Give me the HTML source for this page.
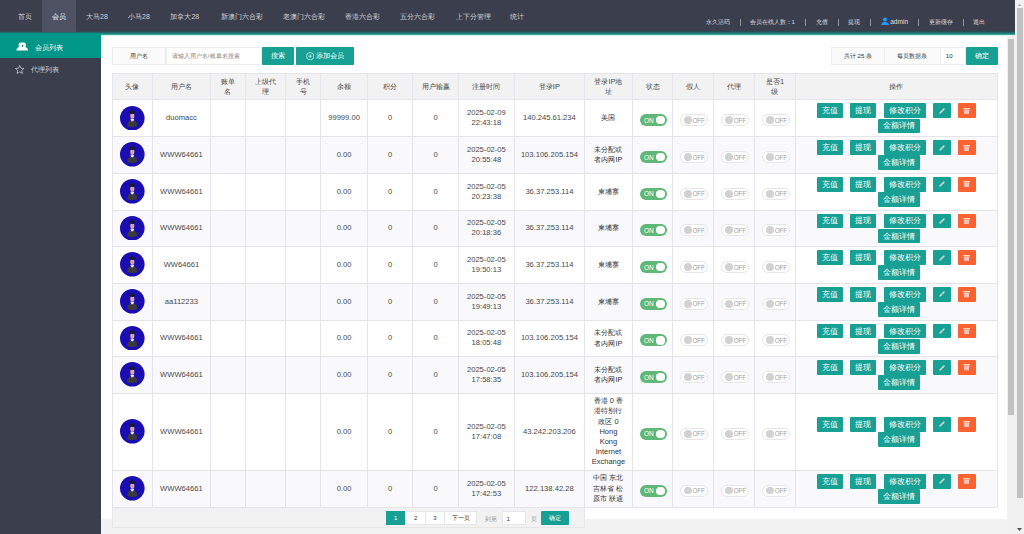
<!DOCTYPE html>
<html><head><meta charset="utf-8"><style>
*{margin:0;padding:0;box-sizing:border-box}
html,body{width:1024px;height:534px;overflow:hidden}
body{background:#f2f2f2;font-family:"Liberation Sans",sans-serif;color:#666;position:relative}
.a{position:absolute}
.c{position:absolute;display:flex;align-items:center;justify-content:center;text-align:center}
.t{position:absolute;white-space:nowrap}
.btn{position:absolute;background:#17a093;color:#fff;border-radius:1px;display:flex;align-items:center;justify-content:center;white-space:nowrap}
</style></head><body>
<div class="a" style="left:0;top:0;width:1015px;height:32px;background:#3b3e4d"></div>
<div class="a" style="left:0;top:31px;width:101px;height:4px;background:linear-gradient(to bottom,#3b3e4d 0px,#2c5055 1px,#088a80 2px,#009688 3px)"></div>
<div class="a" style="left:101px;top:30px;width:914px;height:7px;background:linear-gradient(to bottom,#3b3e4d 0px,#35454f 1px,#1e5558 2px,#21847f 3.2px,#1c7a76 4.2px,#b0f2e4 5.2px,#f0fffa 6px,#fff 7px)"></div>
<div class="a" style="left:41.6px;top:0;width:34.2px;height:32px;background:#4E5262"></div>
<div class="t" style="left:17.6px;top:12.2px;font-size:7px;line-height:9px;color:rgba(255,255,255,.75)">首页</div>
<div class="t" style="left:51.7px;top:12.2px;font-size:7px;line-height:9px;color:#fff">会员</div>
<div class="t" style="left:86px;top:12.2px;font-size:7px;line-height:9px;color:rgba(255,255,255,.75)">大马28</div>
<div class="t" style="left:128px;top:12.2px;font-size:7px;line-height:9px;color:rgba(255,255,255,.75)">小马28</div>
<div class="t" style="left:170.4px;top:12.2px;font-size:7px;line-height:9px;color:rgba(255,255,255,.75)">加拿大28</div>
<div class="t" style="left:220.5px;top:12.2px;font-size:7px;line-height:9px;color:rgba(255,255,255,.75)">新澳门六合彩</div>
<div class="t" style="left:282.8px;top:12.2px;font-size:7px;line-height:9px;color:rgba(255,255,255,.75)">老澳门六合彩</div>
<div class="t" style="left:345.2px;top:12.2px;font-size:7px;line-height:9px;color:rgba(255,255,255,.75)">香港六合彩</div>
<div class="t" style="left:400px;top:12.2px;font-size:7px;line-height:9px;color:rgba(255,255,255,.75)">五分六合彩</div>
<div class="t" style="left:456px;top:12.2px;font-size:7px;line-height:9px;color:rgba(255,255,255,.75)">上下分管理</div>
<div class="t" style="left:510px;top:12.2px;font-size:7px;line-height:9px;color:rgba(255,255,255,.75)">统计</div>
<div class="t" style="left:705.7px;top:17.6px;font-size:6px;line-height:8px;color:rgba(255,255,255,.8)">永久活码</div>
<div class="a" style="left:739.5px;top:19px;width:1px;height:6.7px;background:rgba(255,255,255,.45)"></div>
<div class="t" style="left:749.6px;top:17.6px;font-size:6px;line-height:8px;color:rgba(255,255,255,.8)">会员在线人数：1</div>
<div class="a" style="left:805.1px;top:19px;width:1px;height:6.7px;background:rgba(255,255,255,.45)"></div>
<div class="t" style="left:815.6px;top:17.6px;font-size:6px;line-height:8px;color:rgba(255,255,255,.8)">充值</div>
<div class="a" style="left:837.8px;top:19px;width:1px;height:6.7px;background:rgba(255,255,255,.45)"></div>
<div class="t" style="left:848px;top:17.6px;font-size:6px;line-height:8px;color:rgba(255,255,255,.8)">提现</div>
<div class="a" style="left:870.2px;top:19px;width:1px;height:6.7px;background:rgba(255,255,255,.45)"></div>
<div class="t" style="left:890.2px;top:17.6px;font-size:6.6px;line-height:8px;color:rgba(255,255,255,.85)">admin</div>
<div class="a" style="left:918.1px;top:19px;width:1px;height:6.7px;background:rgba(255,255,255,.45)"></div>
<div class="t" style="left:929.2px;top:17.6px;font-size:6px;line-height:8px;color:rgba(255,255,255,.8)">更新缓存</div>
<div class="a" style="left:962.9px;top:19px;width:1px;height:6.7px;background:rgba(255,255,255,.45)"></div>
<div class="t" style="left:973px;top:17.6px;font-size:6px;line-height:8px;color:rgba(255,255,255,.8)">退出</div>
<svg class="a" style="left:880.5px;top:16.5px" width="8" height="8.5" viewBox="0 0 16 17"><circle cx="8" cy="5" r="4" fill="#1E9FFF"/><path d="M0 17 Q1 10 8 10 Q15 10 16 17Z" fill="#1E9FFF"/></svg>
<div class="a" style="left:0;top:34.7px;width:101px;height:500px;background:#3b3e4d"></div>
<div class="a" style="left:0;top:34.7px;width:101px;height:23.3px;background:#009688"></div>
<div class="t" style="left:35px;top:42.5px;font-size:7px;line-height:9px;color:#fff">会员列表</div>
<div class="t" style="left:31px;top:64.5px;font-size:7px;line-height:9px;color:rgba(255,255,255,.75)">代理列表</div>
<svg class="a" style="left:15.5px;top:41.5px" width="12.5" height="9" viewBox="0 0 12.5 9"><rect x="2.7" y="0.4" width="7.1" height="5.8" rx="2.2" fill="#fff"/><path d="M0.4 8.5 Q0.5 5.3 4 5.1 H8.5 Q11.9 5.3 12 8.5Z" fill="#fff"/><path d="M5.6 2.8 L6.6 5.6 L7.6 3.2Z" fill="#2a7f78"/></svg>
<svg class="a" style="left:15px;top:64.5px" width="9.5" height="9" viewBox="0 0 20 19"><path d="M10 1 L12.6 6.8 L19 7.3 L14.2 11.5 L15.7 17.8 L10 14.5 L4.3 17.8 L5.8 11.5 L1 7.3 L7.4 6.8Z" fill="none" stroke="rgba(255,255,255,.75)" stroke-width="1.6" stroke-linejoin="round"/></svg>
<div class="a" style="left:101px;top:37px;width:906px;height:482px;background:#fff"></div>
<div class="c" style="left:111.9px;top:46.6px;width:54.1px;height:18.7px;background:#FBFBFB;border:0.6px solid #ececec;font-size:6px;color:#333;padding-top:1.2px">用户名</div>
<div class="a" style="left:166px;top:46.6px;width:96px;height:18.7px;background:#fff;border:0.6px solid #ececec"></div>
<div class="t" style="left:171.8px;top:51.9px;font-size:6.2px;line-height:8px;color:#808080">请输入用户名/账单名搜索</div>
<div class="btn" style="left:262px;top:46.6px;width:32.4px;height:18.7px;font-size:7.2px">搜索</div>
<div class="btn" style="left:296px;top:46.6px;width:57.8px;height:18.7px;font-size:7.1px"><svg width="8.4" height="8.4" viewBox="0 0 16 16" style="margin-right:2px"><circle cx="8" cy="8" r="7" fill="none" stroke="#fff" stroke-width="1.2"/><path d="M8 4.5V11.5M4.5 8H11.5" stroke="#fff" stroke-width="1.2"/></svg>添加会员</div>
<div class="c" style="left:830.6px;top:46.5px;width:54.7px;height:18.5px;background:#FBFBFB;border:0.6px solid #ececec;font-size:6.1px;color:#333;padding-top:1.6px">共计 25 条</div>
<div class="c" style="left:885.3px;top:46.5px;width:55.3px;height:18.5px;background:#FBFBFB;border:0.6px solid #ececec;border-left:0;font-size:6.1px;color:#333;padding-top:1.6px">每页数据条</div>
<div class="a" style="left:940.6px;top:46.5px;width:25px;height:18.5px;background:#fff;border:0.6px solid #ececec;border-left:0"></div>
<div class="t" style="left:945.8px;top:52px;font-size:6.1px;line-height:8px;color:#333">10</div>
<div class="btn" style="left:965.6px;top:46.5px;width:32.1px;height:18.5px;font-size:7.2px">确定</div>
<div class="a" style="left:112px;top:73.4px;width:885px;height:26.19999999999999px;background:#f2f2f2"></div>
<div class="a" style="left:112px;top:136.6px;width:885px;height:36.70000000000002px;background:#f9f9fc"></div>
<div class="a" style="left:112px;top:210px;width:885px;height:36.599999999999994px;background:#f9f9fc"></div>
<div class="a" style="left:112px;top:283.3px;width:885px;height:36.89999999999998px;background:#f9f9fc"></div>
<div class="a" style="left:112px;top:356.5px;width:885px;height:36.80000000000001px;background:#f9f9fc"></div>
<div class="a" style="left:112px;top:470px;width:885px;height:37px;background:#f9f9fc"></div>
<div class="a" style="left:112px;top:507px;width:472.5px;height:21.3px;background:#f2f2f2;border:0.6px solid #e6e6e6;border-top:0"></div>
<div class="a" style="left:112px;top:73.10000000000001px;width:885px;height:0.65px;background:#e4e4ea"></div>
<div class="a" style="left:112px;top:99.3px;width:885px;height:0.65px;background:#e4e4ea"></div>
<div class="a" style="left:112px;top:99.3px;width:885px;height:0.65px;background:#e4e4ea"></div>
<div class="a" style="left:112px;top:136.29999999999998px;width:885px;height:0.65px;background:#e4e4ea"></div>
<div class="a" style="left:112px;top:173.0px;width:885px;height:0.65px;background:#e4e4ea"></div>
<div class="a" style="left:112px;top:209.7px;width:885px;height:0.65px;background:#e4e4ea"></div>
<div class="a" style="left:112px;top:246.29999999999998px;width:885px;height:0.65px;background:#e4e4ea"></div>
<div class="a" style="left:112px;top:283.0px;width:885px;height:0.65px;background:#e4e4ea"></div>
<div class="a" style="left:112px;top:319.9px;width:885px;height:0.65px;background:#e4e4ea"></div>
<div class="a" style="left:112px;top:356.2px;width:885px;height:0.65px;background:#e4e4ea"></div>
<div class="a" style="left:112px;top:393.0px;width:885px;height:0.65px;background:#e4e4ea"></div>
<div class="a" style="left:112px;top:469.7px;width:885px;height:0.65px;background:#e4e4ea"></div>
<div class="a" style="left:112px;top:506.7px;width:885px;height:0.65px;background:#e4e4ea"></div>
<div class="a" style="left:111.7px;top:73.4px;width:0.65px;height:433.6px;background:#e4e4ea"></div>
<div class="a" style="left:152.2px;top:73.4px;width:0.65px;height:433.6px;background:#e4e4ea"></div>
<div class="a" style="left:210.0px;top:73.4px;width:0.65px;height:433.6px;background:#e4e4ea"></div>
<div class="a" style="left:245.0px;top:73.4px;width:0.65px;height:433.6px;background:#e4e4ea"></div>
<div class="a" style="left:285.3px;top:73.4px;width:0.65px;height:433.6px;background:#e4e4ea"></div>
<div class="a" style="left:320.3px;top:73.4px;width:0.65px;height:433.6px;background:#e4e4ea"></div>
<div class="a" style="left:367.2px;top:73.4px;width:0.65px;height:433.6px;background:#e4e4ea"></div>
<div class="a" style="left:412.4px;top:73.4px;width:0.65px;height:433.6px;background:#e4e4ea"></div>
<div class="a" style="left:458.09999999999997px;top:73.4px;width:0.65px;height:433.6px;background:#e4e4ea"></div>
<div class="a" style="left:514.1px;top:73.4px;width:0.65px;height:433.6px;background:#e4e4ea"></div>
<div class="a" style="left:584.1px;top:73.4px;width:0.65px;height:433.6px;background:#e4e4ea"></div>
<div class="a" style="left:632.2px;top:73.4px;width:0.65px;height:433.6px;background:#e4e4ea"></div>
<div class="a" style="left:672.2px;top:73.4px;width:0.65px;height:433.6px;background:#e4e4ea"></div>
<div class="a" style="left:713.1px;top:73.4px;width:0.65px;height:433.6px;background:#e4e4ea"></div>
<div class="a" style="left:754.4000000000001px;top:73.4px;width:0.65px;height:433.6px;background:#e4e4ea"></div>
<div class="a" style="left:795.0px;top:73.4px;width:0.65px;height:433.6px;background:#e4e4ea"></div>
<div class="a" style="left:996.7px;top:73.4px;width:0.65px;height:433.6px;background:#e4e4ea"></div>
<div class="c" style="left:112px;top:74.4px;width:40.5px;height:26.19999999999999px;font-size:7.5px;line-height:10.8px;color:#4a4a4a"><div><span style="font-size:0.93em">头像</span></div></div>
<div class="c" style="left:152.5px;top:74.4px;width:57.80000000000001px;height:26.19999999999999px;font-size:7.5px;line-height:10.8px;color:#4a4a4a"><div><span style="font-size:0.93em">用户名</span></div></div>
<div class="c" style="left:210.3px;top:74.4px;width:35.0px;height:26.19999999999999px;font-size:7.5px;line-height:10.8px;color:#4a4a4a"><div><span style="font-size:0.93em">账单</span><br><span style="font-size:0.93em">名</span></div></div>
<div class="c" style="left:245.3px;top:74.4px;width:40.30000000000001px;height:26.19999999999999px;font-size:7.5px;line-height:10.8px;color:#4a4a4a"><div><span style="font-size:0.93em">上级代</span><br><span style="font-size:0.93em">理</span></div></div>
<div class="c" style="left:285.6px;top:74.4px;width:35.0px;height:26.19999999999999px;font-size:7.5px;line-height:10.8px;color:#4a4a4a"><div><span style="font-size:0.93em">手机</span><br><span style="font-size:0.93em">号</span></div></div>
<div class="c" style="left:320.6px;top:74.4px;width:46.89999999999998px;height:26.19999999999999px;font-size:7.5px;line-height:10.8px;color:#4a4a4a"><div><span style="font-size:0.93em">余额</span></div></div>
<div class="c" style="left:367.5px;top:74.4px;width:45.19999999999999px;height:26.19999999999999px;font-size:7.5px;line-height:10.8px;color:#4a4a4a"><div><span style="font-size:0.93em">积分</span></div></div>
<div class="c" style="left:412.7px;top:74.4px;width:45.69999999999999px;height:26.19999999999999px;font-size:7.5px;line-height:10.8px;color:#4a4a4a"><div><span style="font-size:0.93em">用户输赢</span></div></div>
<div class="c" style="left:458.4px;top:74.4px;width:56.0px;height:26.19999999999999px;font-size:7.5px;line-height:10.8px;color:#4a4a4a"><div><span style="font-size:0.93em">注册时间</span></div></div>
<div class="c" style="left:514.4px;top:74.4px;width:70.0px;height:26.19999999999999px;font-size:7.5px;line-height:10.8px;color:#4a4a4a"><div><span style="font-size:0.93em">登录</span>IP</div></div>
<div class="c" style="left:584.4px;top:74.4px;width:48.10000000000002px;height:26.19999999999999px;font-size:7.5px;line-height:10.8px;color:#4a4a4a"><div><span style="font-size:0.93em">登录</span>IP<span style="font-size:0.93em">地</span><br><span style="font-size:0.93em">址</span></div></div>
<div class="c" style="left:632.5px;top:74.4px;width:40.0px;height:26.19999999999999px;font-size:7.5px;line-height:10.8px;color:#4a4a4a"><div><span style="font-size:0.93em">状态</span></div></div>
<div class="c" style="left:672.5px;top:74.4px;width:40.89999999999998px;height:26.19999999999999px;font-size:7.5px;line-height:10.8px;color:#4a4a4a"><div><span style="font-size:0.93em">假人</span></div></div>
<div class="c" style="left:713.4px;top:74.4px;width:41.30000000000007px;height:26.19999999999999px;font-size:7.5px;line-height:10.8px;color:#4a4a4a"><div><span style="font-size:0.93em">代理</span></div></div>
<div class="c" style="left:754.7px;top:74.4px;width:40.59999999999991px;height:26.19999999999999px;font-size:7.5px;line-height:10.8px;color:#4a4a4a"><div><span style="font-size:0.93em">是否</span>1<br><span style="font-size:0.93em">级</span></div></div>
<div class="c" style="left:795.3px;top:74.4px;width:201.70000000000005px;height:26.19999999999999px;font-size:7.5px;line-height:10.8px;color:#4a4a4a"><div><span style="font-size:0.93em">操作</span></div></div>
<div class="c" style="left:112px;top:99.6px;width:40.5px;height:37.0px;font-size:7.6px;line-height:9.9px;color:#484848;"><div><svg style="display:block;margin-top:-0.4px" width="24.6" height="24.6" viewBox="0 0 50 50"><circle cx="25" cy="25" r="25" fill="#1a0eb0"/><g><path d="M15 41 Q14 30 25 29 Q36 30 35 41 Q25 44 15 41Z" fill="#3a3a3c"/><path d="M21 26 H29 L27 31 H23Z" fill="#e8e8ee"/><ellipse cx="25" cy="20" rx="4.2" ry="6" fill="#dcaaa6"/><ellipse cx="25" cy="12.5" rx="4.8" ry="3.8" fill="#1a1a22"/></g></svg></div></div>
<div class="c" style="left:152.5px;top:99.6px;width:57.80000000000001px;height:37.0px;font-size:7.6px;line-height:9.9px;color:#484848;"><div>duomacc</div></div>
<div class="c" style="left:320.6px;top:99.6px;width:46.89999999999998px;height:37.0px;font-size:7.6px;line-height:9.9px;color:#484848;"><div>99999.00</div></div>
<div class="c" style="left:367.5px;top:99.6px;width:45.19999999999999px;height:37.0px;font-size:7.6px;line-height:9.9px;color:#484848;"><div>0</div></div>
<div class="c" style="left:412.7px;top:99.6px;width:45.69999999999999px;height:37.0px;font-size:7.6px;line-height:9.9px;color:#484848;"><div>0</div></div>
<div class="c" style="left:458.4px;top:99.6px;width:56.0px;height:37.0px;font-size:7.6px;line-height:9.9px;color:#484848;"><div>2025-02-09<br>22:43:18</div></div>
<div class="c" style="left:514.4px;top:99.6px;width:70.0px;height:37.0px;font-size:7.6px;line-height:9.9px;color:#484848;"><div>140.245.61.234</div></div>
<div class="c" style="left:584.4px;top:99.6px;width:48.10000000000002px;height:37.0px;font-size:7.6px;line-height:9.9px;color:#484848;font-size:7.5px;line-height:10.2px;color:#333;padding-top:0.5px"><div><span style="font-size:0.93em">美国</span></div></div>
<div class="a" style="left:639.9px;top:114.19999999999999px;width:27px;height:12px;border-radius:6px;background:#5FB878"></div>
<div class="a" style="left:656.4px;top:116.1px;width:8.2px;height:8.2px;border-radius:50%;background:#fff"></div>
<div class="t" style="left:643.9px;top:115.69999999999999px;font-size:6.5px;line-height:9px;color:#fff">ON</div>
<div class="a" style="left:680.1px;top:114.19999999999999px;width:27.5px;height:12px;border-radius:6px;border:0.8px solid #e6e6e6;background:#fff"></div>
<div class="a" style="left:683.9px;top:116.19999999999999px;width:7.8px;height:7.8px;border-radius:50%;background:#d2d2d2"></div>
<div class="t" style="left:692.5px;top:115.69999999999999px;font-size:6.3px;line-height:9px;color:#a0a0a0;letter-spacing:-0.15px">OFF</div>
<div class="a" style="left:721.3px;top:114.19999999999999px;width:27.5px;height:12px;border-radius:6px;border:0.8px solid #e6e6e6;background:#fff"></div>
<div class="a" style="left:725.0999999999999px;top:116.19999999999999px;width:7.8px;height:7.8px;border-radius:50%;background:#d2d2d2"></div>
<div class="t" style="left:733.6999999999999px;top:115.69999999999999px;font-size:6.3px;line-height:9px;color:#a0a0a0;letter-spacing:-0.15px">OFF</div>
<div class="a" style="left:762.3px;top:114.19999999999999px;width:27.5px;height:12px;border-radius:6px;border:0.8px solid #e6e6e6;background:#fff"></div>
<div class="a" style="left:766.0999999999999px;top:116.19999999999999px;width:7.8px;height:7.8px;border-radius:50%;background:#d2d2d2"></div>
<div class="t" style="left:774.6999999999999px;top:115.69999999999999px;font-size:6.3px;line-height:9px;color:#a0a0a0;letter-spacing:-0.15px">OFF</div>
<div class="btn" style="left:817px;top:103.39999999999999px;width:25.9px;height:14.8px;font-size:7.9px">充值</div>
<div class="btn" style="left:850px;top:103.39999999999999px;width:26px;height:14.8px;font-size:7.9px">提现</div>
<div class="btn" style="left:883.5px;top:103.39999999999999px;width:42px;height:14.8px;font-size:7.9px">修改积分</div>
<div class="btn" style="left:932.7px;top:103.39999999999999px;width:17.9px;height:14.8px"><svg width="6" height="6" viewBox="0 0 12 12"><path d="M2 10 L10 2" stroke="#fff" stroke-width="2.2" stroke-linecap="round"/></svg></div>
<div class="btn" style="left:957.8px;top:103.39999999999999px;width:17.9px;height:14.8px;background:#fb6232"><svg width="7" height="6.2" viewBox="0 0 14 12.4"><rect x="0" y="0" width="14" height="2.4" fill="rgba(255,228,200,.9)"/><path d="M1.4 3H12.6L11.8 12.4H2.2Z" fill="rgba(255,215,215,.8)"/></svg></div>
<div class="btn" style="left:878px;top:118.49999999999999px;width:41.8px;height:14.8px;font-size:7.9px">金额详情</div>
<div class="c" style="left:112px;top:136.6px;width:40.5px;height:36.70000000000002px;font-size:7.6px;line-height:9.9px;color:#484848;"><div><svg style="display:block;margin-top:-0.4px" width="24.6" height="24.6" viewBox="0 0 50 50"><circle cx="25" cy="25" r="25" fill="#1a0eb0"/><g><path d="M15 41 Q14 30 25 29 Q36 30 35 41 Q25 44 15 41Z" fill="#3a3a3c"/><path d="M21 26 H29 L27 31 H23Z" fill="#e8e8ee"/><ellipse cx="25" cy="20" rx="4.2" ry="6" fill="#dcaaa6"/><ellipse cx="25" cy="12.5" rx="4.8" ry="3.8" fill="#1a1a22"/></g></svg></div></div>
<div class="c" style="left:152.5px;top:136.6px;width:57.80000000000001px;height:36.70000000000002px;font-size:7.6px;line-height:9.9px;color:#484848;"><div>WWW64661</div></div>
<div class="c" style="left:320.6px;top:136.6px;width:46.89999999999998px;height:36.70000000000002px;font-size:7.6px;line-height:9.9px;color:#484848;"><div>0.00</div></div>
<div class="c" style="left:367.5px;top:136.6px;width:45.19999999999999px;height:36.70000000000002px;font-size:7.6px;line-height:9.9px;color:#484848;"><div>0</div></div>
<div class="c" style="left:412.7px;top:136.6px;width:45.69999999999999px;height:36.70000000000002px;font-size:7.6px;line-height:9.9px;color:#484848;"><div>0</div></div>
<div class="c" style="left:458.4px;top:136.6px;width:56.0px;height:36.70000000000002px;font-size:7.6px;line-height:9.9px;color:#484848;"><div>2025-02-05<br>20:55:48</div></div>
<div class="c" style="left:514.4px;top:136.6px;width:70.0px;height:36.70000000000002px;font-size:7.6px;line-height:9.9px;color:#484848;"><div>103.106.205.154</div></div>
<div class="c" style="left:584.4px;top:136.6px;width:48.10000000000002px;height:36.70000000000002px;font-size:7.6px;line-height:9.9px;color:#484848;font-size:7.5px;line-height:10.2px;color:#333;padding-top:0.5px"><div><span style="font-size:0.93em">未分配或</span><br><span style="font-size:0.93em">者内网</span>IP</div></div>
<div class="a" style="left:639.9px;top:151.04999999999998px;width:27px;height:12px;border-radius:6px;background:#5FB878"></div>
<div class="a" style="left:656.4px;top:152.95px;width:8.2px;height:8.2px;border-radius:50%;background:#fff"></div>
<div class="t" style="left:643.9px;top:152.54999999999998px;font-size:6.5px;line-height:9px;color:#fff">ON</div>
<div class="a" style="left:680.1px;top:151.04999999999998px;width:27.5px;height:12px;border-radius:6px;border:0.8px solid #e6e6e6;background:#fff"></div>
<div class="a" style="left:683.9px;top:153.04999999999998px;width:7.8px;height:7.8px;border-radius:50%;background:#d2d2d2"></div>
<div class="t" style="left:692.5px;top:152.54999999999998px;font-size:6.3px;line-height:9px;color:#a0a0a0;letter-spacing:-0.15px">OFF</div>
<div class="a" style="left:721.3px;top:151.04999999999998px;width:27.5px;height:12px;border-radius:6px;border:0.8px solid #e6e6e6;background:#fff"></div>
<div class="a" style="left:725.0999999999999px;top:153.04999999999998px;width:7.8px;height:7.8px;border-radius:50%;background:#d2d2d2"></div>
<div class="t" style="left:733.6999999999999px;top:152.54999999999998px;font-size:6.3px;line-height:9px;color:#a0a0a0;letter-spacing:-0.15px">OFF</div>
<div class="a" style="left:762.3px;top:151.04999999999998px;width:27.5px;height:12px;border-radius:6px;border:0.8px solid #e6e6e6;background:#fff"></div>
<div class="a" style="left:766.0999999999999px;top:153.04999999999998px;width:7.8px;height:7.8px;border-radius:50%;background:#d2d2d2"></div>
<div class="t" style="left:774.6999999999999px;top:152.54999999999998px;font-size:6.3px;line-height:9px;color:#a0a0a0;letter-spacing:-0.15px">OFF</div>
<div class="btn" style="left:817px;top:140.25px;width:25.9px;height:14.8px;font-size:7.9px">充值</div>
<div class="btn" style="left:850px;top:140.25px;width:26px;height:14.8px;font-size:7.9px">提现</div>
<div class="btn" style="left:883.5px;top:140.25px;width:42px;height:14.8px;font-size:7.9px">修改积分</div>
<div class="btn" style="left:932.7px;top:140.25px;width:17.9px;height:14.8px"><svg width="6" height="6" viewBox="0 0 12 12"><path d="M2 10 L10 2" stroke="#fff" stroke-width="2.2" stroke-linecap="round"/></svg></div>
<div class="btn" style="left:957.8px;top:140.25px;width:17.9px;height:14.8px;background:#fb6232"><svg width="7" height="6.2" viewBox="0 0 14 12.4"><rect x="0" y="0" width="14" height="2.4" fill="rgba(255,228,200,.9)"/><path d="M1.4 3H12.6L11.8 12.4H2.2Z" fill="rgba(255,215,215,.8)"/></svg></div>
<div class="btn" style="left:878px;top:155.35px;width:41.8px;height:14.8px;font-size:7.9px">金额详情</div>
<div class="c" style="left:112px;top:173.3px;width:40.5px;height:36.69999999999999px;font-size:7.6px;line-height:9.9px;color:#484848;"><div><svg style="display:block;margin-top:-0.4px" width="24.6" height="24.6" viewBox="0 0 50 50"><circle cx="25" cy="25" r="25" fill="#1a0eb0"/><g><path d="M15 41 Q14 30 25 29 Q36 30 35 41 Q25 44 15 41Z" fill="#3a3a3c"/><path d="M21 26 H29 L27 31 H23Z" fill="#e8e8ee"/><ellipse cx="25" cy="20" rx="4.2" ry="6" fill="#dcaaa6"/><ellipse cx="25" cy="12.5" rx="4.8" ry="3.8" fill="#1a1a22"/></g></svg></div></div>
<div class="c" style="left:152.5px;top:173.3px;width:57.80000000000001px;height:36.69999999999999px;font-size:7.6px;line-height:9.9px;color:#484848;"><div>WWW64661</div></div>
<div class="c" style="left:320.6px;top:173.3px;width:46.89999999999998px;height:36.69999999999999px;font-size:7.6px;line-height:9.9px;color:#484848;"><div>0.00</div></div>
<div class="c" style="left:367.5px;top:173.3px;width:45.19999999999999px;height:36.69999999999999px;font-size:7.6px;line-height:9.9px;color:#484848;"><div>0</div></div>
<div class="c" style="left:412.7px;top:173.3px;width:45.69999999999999px;height:36.69999999999999px;font-size:7.6px;line-height:9.9px;color:#484848;"><div>0</div></div>
<div class="c" style="left:458.4px;top:173.3px;width:56.0px;height:36.69999999999999px;font-size:7.6px;line-height:9.9px;color:#484848;"><div>2025-02-05<br>20:23:38</div></div>
<div class="c" style="left:514.4px;top:173.3px;width:70.0px;height:36.69999999999999px;font-size:7.6px;line-height:9.9px;color:#484848;"><div>36.37.253.114</div></div>
<div class="c" style="left:584.4px;top:173.3px;width:48.10000000000002px;height:36.69999999999999px;font-size:7.6px;line-height:9.9px;color:#484848;font-size:7.5px;line-height:10.2px;color:#333;padding-top:0.5px"><div><span style="font-size:0.93em">柬埔寨</span></div></div>
<div class="a" style="left:639.9px;top:187.75px;width:27px;height:12px;border-radius:6px;background:#5FB878"></div>
<div class="a" style="left:656.4px;top:189.65px;width:8.2px;height:8.2px;border-radius:50%;background:#fff"></div>
<div class="t" style="left:643.9px;top:189.25px;font-size:6.5px;line-height:9px;color:#fff">ON</div>
<div class="a" style="left:680.1px;top:187.75px;width:27.5px;height:12px;border-radius:6px;border:0.8px solid #e6e6e6;background:#fff"></div>
<div class="a" style="left:683.9px;top:189.75px;width:7.8px;height:7.8px;border-radius:50%;background:#d2d2d2"></div>
<div class="t" style="left:692.5px;top:189.25px;font-size:6.3px;line-height:9px;color:#a0a0a0;letter-spacing:-0.15px">OFF</div>
<div class="a" style="left:721.3px;top:187.75px;width:27.5px;height:12px;border-radius:6px;border:0.8px solid #e6e6e6;background:#fff"></div>
<div class="a" style="left:725.0999999999999px;top:189.75px;width:7.8px;height:7.8px;border-radius:50%;background:#d2d2d2"></div>
<div class="t" style="left:733.6999999999999px;top:189.25px;font-size:6.3px;line-height:9px;color:#a0a0a0;letter-spacing:-0.15px">OFF</div>
<div class="a" style="left:762.3px;top:187.75px;width:27.5px;height:12px;border-radius:6px;border:0.8px solid #e6e6e6;background:#fff"></div>
<div class="a" style="left:766.0999999999999px;top:189.75px;width:7.8px;height:7.8px;border-radius:50%;background:#d2d2d2"></div>
<div class="t" style="left:774.6999999999999px;top:189.25px;font-size:6.3px;line-height:9px;color:#a0a0a0;letter-spacing:-0.15px">OFF</div>
<div class="btn" style="left:817px;top:176.95000000000002px;width:25.9px;height:14.8px;font-size:7.9px">充值</div>
<div class="btn" style="left:850px;top:176.95000000000002px;width:26px;height:14.8px;font-size:7.9px">提现</div>
<div class="btn" style="left:883.5px;top:176.95000000000002px;width:42px;height:14.8px;font-size:7.9px">修改积分</div>
<div class="btn" style="left:932.7px;top:176.95000000000002px;width:17.9px;height:14.8px"><svg width="6" height="6" viewBox="0 0 12 12"><path d="M2 10 L10 2" stroke="#fff" stroke-width="2.2" stroke-linecap="round"/></svg></div>
<div class="btn" style="left:957.8px;top:176.95000000000002px;width:17.9px;height:14.8px;background:#fb6232"><svg width="7" height="6.2" viewBox="0 0 14 12.4"><rect x="0" y="0" width="14" height="2.4" fill="rgba(255,228,200,.9)"/><path d="M1.4 3H12.6L11.8 12.4H2.2Z" fill="rgba(255,215,215,.8)"/></svg></div>
<div class="btn" style="left:878px;top:192.05px;width:41.8px;height:14.8px;font-size:7.9px">金额详情</div>
<div class="c" style="left:112px;top:210px;width:40.5px;height:36.599999999999994px;font-size:7.6px;line-height:9.9px;color:#484848;"><div><svg style="display:block;margin-top:-0.4px" width="24.6" height="24.6" viewBox="0 0 50 50"><circle cx="25" cy="25" r="25" fill="#1a0eb0"/><g><path d="M15 41 Q14 30 25 29 Q36 30 35 41 Q25 44 15 41Z" fill="#3a3a3c"/><path d="M21 26 H29 L27 31 H23Z" fill="#e8e8ee"/><ellipse cx="25" cy="20" rx="4.2" ry="6" fill="#dcaaa6"/><ellipse cx="25" cy="12.5" rx="4.8" ry="3.8" fill="#1a1a22"/></g></svg></div></div>
<div class="c" style="left:152.5px;top:210px;width:57.80000000000001px;height:36.599999999999994px;font-size:7.6px;line-height:9.9px;color:#484848;"><div>WWW64661</div></div>
<div class="c" style="left:320.6px;top:210px;width:46.89999999999998px;height:36.599999999999994px;font-size:7.6px;line-height:9.9px;color:#484848;"><div>0.00</div></div>
<div class="c" style="left:367.5px;top:210px;width:45.19999999999999px;height:36.599999999999994px;font-size:7.6px;line-height:9.9px;color:#484848;"><div>0</div></div>
<div class="c" style="left:412.7px;top:210px;width:45.69999999999999px;height:36.599999999999994px;font-size:7.6px;line-height:9.9px;color:#484848;"><div>0</div></div>
<div class="c" style="left:458.4px;top:210px;width:56.0px;height:36.599999999999994px;font-size:7.6px;line-height:9.9px;color:#484848;"><div>2025-02-05<br>20:18:36</div></div>
<div class="c" style="left:514.4px;top:210px;width:70.0px;height:36.599999999999994px;font-size:7.6px;line-height:9.9px;color:#484848;"><div>36.37.253.114</div></div>
<div class="c" style="left:584.4px;top:210px;width:48.10000000000002px;height:36.599999999999994px;font-size:7.6px;line-height:9.9px;color:#484848;font-size:7.5px;line-height:10.2px;color:#333;padding-top:0.5px"><div><span style="font-size:0.93em">柬埔寨</span></div></div>
<div class="a" style="left:639.9px;top:224.4px;width:27px;height:12px;border-radius:6px;background:#5FB878"></div>
<div class="a" style="left:656.4px;top:226.3px;width:8.2px;height:8.2px;border-radius:50%;background:#fff"></div>
<div class="t" style="left:643.9px;top:225.9px;font-size:6.5px;line-height:9px;color:#fff">ON</div>
<div class="a" style="left:680.1px;top:224.4px;width:27.5px;height:12px;border-radius:6px;border:0.8px solid #e6e6e6;background:#fff"></div>
<div class="a" style="left:683.9px;top:226.4px;width:7.8px;height:7.8px;border-radius:50%;background:#d2d2d2"></div>
<div class="t" style="left:692.5px;top:225.9px;font-size:6.3px;line-height:9px;color:#a0a0a0;letter-spacing:-0.15px">OFF</div>
<div class="a" style="left:721.3px;top:224.4px;width:27.5px;height:12px;border-radius:6px;border:0.8px solid #e6e6e6;background:#fff"></div>
<div class="a" style="left:725.0999999999999px;top:226.4px;width:7.8px;height:7.8px;border-radius:50%;background:#d2d2d2"></div>
<div class="t" style="left:733.6999999999999px;top:225.9px;font-size:6.3px;line-height:9px;color:#a0a0a0;letter-spacing:-0.15px">OFF</div>
<div class="a" style="left:762.3px;top:224.4px;width:27.5px;height:12px;border-radius:6px;border:0.8px solid #e6e6e6;background:#fff"></div>
<div class="a" style="left:766.0999999999999px;top:226.4px;width:7.8px;height:7.8px;border-radius:50%;background:#d2d2d2"></div>
<div class="t" style="left:774.6999999999999px;top:225.9px;font-size:6.3px;line-height:9px;color:#a0a0a0;letter-spacing:-0.15px">OFF</div>
<div class="btn" style="left:817px;top:213.60000000000002px;width:25.9px;height:14.8px;font-size:7.9px">充值</div>
<div class="btn" style="left:850px;top:213.60000000000002px;width:26px;height:14.8px;font-size:7.9px">提现</div>
<div class="btn" style="left:883.5px;top:213.60000000000002px;width:42px;height:14.8px;font-size:7.9px">修改积分</div>
<div class="btn" style="left:932.7px;top:213.60000000000002px;width:17.9px;height:14.8px"><svg width="6" height="6" viewBox="0 0 12 12"><path d="M2 10 L10 2" stroke="#fff" stroke-width="2.2" stroke-linecap="round"/></svg></div>
<div class="btn" style="left:957.8px;top:213.60000000000002px;width:17.9px;height:14.8px;background:#fb6232"><svg width="7" height="6.2" viewBox="0 0 14 12.4"><rect x="0" y="0" width="14" height="2.4" fill="rgba(255,228,200,.9)"/><path d="M1.4 3H12.6L11.8 12.4H2.2Z" fill="rgba(255,215,215,.8)"/></svg></div>
<div class="btn" style="left:878px;top:228.70000000000002px;width:41.8px;height:14.8px;font-size:7.9px">金额详情</div>
<div class="c" style="left:112px;top:246.6px;width:40.5px;height:36.70000000000002px;font-size:7.6px;line-height:9.9px;color:#484848;"><div><svg style="display:block;margin-top:-0.4px" width="24.6" height="24.6" viewBox="0 0 50 50"><circle cx="25" cy="25" r="25" fill="#1a0eb0"/><g><path d="M15 41 Q14 30 25 29 Q36 30 35 41 Q25 44 15 41Z" fill="#3a3a3c"/><path d="M21 26 H29 L27 31 H23Z" fill="#e8e8ee"/><ellipse cx="25" cy="20" rx="4.2" ry="6" fill="#dcaaa6"/><ellipse cx="25" cy="12.5" rx="4.8" ry="3.8" fill="#1a1a22"/></g></svg></div></div>
<div class="c" style="left:152.5px;top:246.6px;width:57.80000000000001px;height:36.70000000000002px;font-size:7.6px;line-height:9.9px;color:#484848;"><div>WW64661</div></div>
<div class="c" style="left:320.6px;top:246.6px;width:46.89999999999998px;height:36.70000000000002px;font-size:7.6px;line-height:9.9px;color:#484848;"><div>0.00</div></div>
<div class="c" style="left:367.5px;top:246.6px;width:45.19999999999999px;height:36.70000000000002px;font-size:7.6px;line-height:9.9px;color:#484848;"><div>0</div></div>
<div class="c" style="left:412.7px;top:246.6px;width:45.69999999999999px;height:36.70000000000002px;font-size:7.6px;line-height:9.9px;color:#484848;"><div>0</div></div>
<div class="c" style="left:458.4px;top:246.6px;width:56.0px;height:36.70000000000002px;font-size:7.6px;line-height:9.9px;color:#484848;"><div>2025-02-05<br>19:50:13</div></div>
<div class="c" style="left:514.4px;top:246.6px;width:70.0px;height:36.70000000000002px;font-size:7.6px;line-height:9.9px;color:#484848;"><div>36.37.253.114</div></div>
<div class="c" style="left:584.4px;top:246.6px;width:48.10000000000002px;height:36.70000000000002px;font-size:7.6px;line-height:9.9px;color:#484848;font-size:7.5px;line-height:10.2px;color:#333;padding-top:0.5px"><div><span style="font-size:0.93em">柬埔寨</span></div></div>
<div class="a" style="left:639.9px;top:261.05px;width:27px;height:12px;border-radius:6px;background:#5FB878"></div>
<div class="a" style="left:656.4px;top:262.95px;width:8.2px;height:8.2px;border-radius:50%;background:#fff"></div>
<div class="t" style="left:643.9px;top:262.55px;font-size:6.5px;line-height:9px;color:#fff">ON</div>
<div class="a" style="left:680.1px;top:261.05px;width:27.5px;height:12px;border-radius:6px;border:0.8px solid #e6e6e6;background:#fff"></div>
<div class="a" style="left:683.9px;top:263.05px;width:7.8px;height:7.8px;border-radius:50%;background:#d2d2d2"></div>
<div class="t" style="left:692.5px;top:262.55px;font-size:6.3px;line-height:9px;color:#a0a0a0;letter-spacing:-0.15px">OFF</div>
<div class="a" style="left:721.3px;top:261.05px;width:27.5px;height:12px;border-radius:6px;border:0.8px solid #e6e6e6;background:#fff"></div>
<div class="a" style="left:725.0999999999999px;top:263.05px;width:7.8px;height:7.8px;border-radius:50%;background:#d2d2d2"></div>
<div class="t" style="left:733.6999999999999px;top:262.55px;font-size:6.3px;line-height:9px;color:#a0a0a0;letter-spacing:-0.15px">OFF</div>
<div class="a" style="left:762.3px;top:261.05px;width:27.5px;height:12px;border-radius:6px;border:0.8px solid #e6e6e6;background:#fff"></div>
<div class="a" style="left:766.0999999999999px;top:263.05px;width:7.8px;height:7.8px;border-radius:50%;background:#d2d2d2"></div>
<div class="t" style="left:774.6999999999999px;top:262.55px;font-size:6.3px;line-height:9px;color:#a0a0a0;letter-spacing:-0.15px">OFF</div>
<div class="btn" style="left:817px;top:250.25px;width:25.9px;height:14.8px;font-size:7.9px">充值</div>
<div class="btn" style="left:850px;top:250.25px;width:26px;height:14.8px;font-size:7.9px">提现</div>
<div class="btn" style="left:883.5px;top:250.25px;width:42px;height:14.8px;font-size:7.9px">修改积分</div>
<div class="btn" style="left:932.7px;top:250.25px;width:17.9px;height:14.8px"><svg width="6" height="6" viewBox="0 0 12 12"><path d="M2 10 L10 2" stroke="#fff" stroke-width="2.2" stroke-linecap="round"/></svg></div>
<div class="btn" style="left:957.8px;top:250.25px;width:17.9px;height:14.8px;background:#fb6232"><svg width="7" height="6.2" viewBox="0 0 14 12.4"><rect x="0" y="0" width="14" height="2.4" fill="rgba(255,228,200,.9)"/><path d="M1.4 3H12.6L11.8 12.4H2.2Z" fill="rgba(255,215,215,.8)"/></svg></div>
<div class="btn" style="left:878px;top:265.35px;width:41.8px;height:14.8px;font-size:7.9px">金额详情</div>
<div class="c" style="left:112px;top:283.3px;width:40.5px;height:36.89999999999998px;font-size:7.6px;line-height:9.9px;color:#484848;"><div><svg style="display:block;margin-top:-0.4px" width="24.6" height="24.6" viewBox="0 0 50 50"><circle cx="25" cy="25" r="25" fill="#1a0eb0"/><g><path d="M15 41 Q14 30 25 29 Q36 30 35 41 Q25 44 15 41Z" fill="#3a3a3c"/><path d="M21 26 H29 L27 31 H23Z" fill="#e8e8ee"/><ellipse cx="25" cy="20" rx="4.2" ry="6" fill="#dcaaa6"/><ellipse cx="25" cy="12.5" rx="4.8" ry="3.8" fill="#1a1a22"/></g></svg></div></div>
<div class="c" style="left:152.5px;top:283.3px;width:57.80000000000001px;height:36.89999999999998px;font-size:7.6px;line-height:9.9px;color:#484848;"><div>aa112233</div></div>
<div class="c" style="left:320.6px;top:283.3px;width:46.89999999999998px;height:36.89999999999998px;font-size:7.6px;line-height:9.9px;color:#484848;"><div>0.00</div></div>
<div class="c" style="left:367.5px;top:283.3px;width:45.19999999999999px;height:36.89999999999998px;font-size:7.6px;line-height:9.9px;color:#484848;"><div>0</div></div>
<div class="c" style="left:412.7px;top:283.3px;width:45.69999999999999px;height:36.89999999999998px;font-size:7.6px;line-height:9.9px;color:#484848;"><div>0</div></div>
<div class="c" style="left:458.4px;top:283.3px;width:56.0px;height:36.89999999999998px;font-size:7.6px;line-height:9.9px;color:#484848;"><div>2025-02-05<br>19:49:13</div></div>
<div class="c" style="left:514.4px;top:283.3px;width:70.0px;height:36.89999999999998px;font-size:7.6px;line-height:9.9px;color:#484848;"><div>36.37.253.114</div></div>
<div class="c" style="left:584.4px;top:283.3px;width:48.10000000000002px;height:36.89999999999998px;font-size:7.6px;line-height:9.9px;color:#484848;font-size:7.5px;line-height:10.2px;color:#333;padding-top:0.5px"><div><span style="font-size:0.93em">柬埔寨</span></div></div>
<div class="a" style="left:639.9px;top:297.85px;width:27px;height:12px;border-radius:6px;background:#5FB878"></div>
<div class="a" style="left:656.4px;top:299.75px;width:8.2px;height:8.2px;border-radius:50%;background:#fff"></div>
<div class="t" style="left:643.9px;top:299.35px;font-size:6.5px;line-height:9px;color:#fff">ON</div>
<div class="a" style="left:680.1px;top:297.85px;width:27.5px;height:12px;border-radius:6px;border:0.8px solid #e6e6e6;background:#fff"></div>
<div class="a" style="left:683.9px;top:299.85px;width:7.8px;height:7.8px;border-radius:50%;background:#d2d2d2"></div>
<div class="t" style="left:692.5px;top:299.35px;font-size:6.3px;line-height:9px;color:#a0a0a0;letter-spacing:-0.15px">OFF</div>
<div class="a" style="left:721.3px;top:297.85px;width:27.5px;height:12px;border-radius:6px;border:0.8px solid #e6e6e6;background:#fff"></div>
<div class="a" style="left:725.0999999999999px;top:299.85px;width:7.8px;height:7.8px;border-radius:50%;background:#d2d2d2"></div>
<div class="t" style="left:733.6999999999999px;top:299.35px;font-size:6.3px;line-height:9px;color:#a0a0a0;letter-spacing:-0.15px">OFF</div>
<div class="a" style="left:762.3px;top:297.85px;width:27.5px;height:12px;border-radius:6px;border:0.8px solid #e6e6e6;background:#fff"></div>
<div class="a" style="left:766.0999999999999px;top:299.85px;width:7.8px;height:7.8px;border-radius:50%;background:#d2d2d2"></div>
<div class="t" style="left:774.6999999999999px;top:299.35px;font-size:6.3px;line-height:9px;color:#a0a0a0;letter-spacing:-0.15px">OFF</div>
<div class="btn" style="left:817px;top:287.05px;width:25.9px;height:14.8px;font-size:7.9px">充值</div>
<div class="btn" style="left:850px;top:287.05px;width:26px;height:14.8px;font-size:7.9px">提现</div>
<div class="btn" style="left:883.5px;top:287.05px;width:42px;height:14.8px;font-size:7.9px">修改积分</div>
<div class="btn" style="left:932.7px;top:287.05px;width:17.9px;height:14.8px"><svg width="6" height="6" viewBox="0 0 12 12"><path d="M2 10 L10 2" stroke="#fff" stroke-width="2.2" stroke-linecap="round"/></svg></div>
<div class="btn" style="left:957.8px;top:287.05px;width:17.9px;height:14.8px;background:#fb6232"><svg width="7" height="6.2" viewBox="0 0 14 12.4"><rect x="0" y="0" width="14" height="2.4" fill="rgba(255,228,200,.9)"/><path d="M1.4 3H12.6L11.8 12.4H2.2Z" fill="rgba(255,215,215,.8)"/></svg></div>
<div class="btn" style="left:878px;top:302.15000000000003px;width:41.8px;height:14.8px;font-size:7.9px">金额详情</div>
<div class="c" style="left:112px;top:320.2px;width:40.5px;height:36.30000000000001px;font-size:7.6px;line-height:9.9px;color:#484848;"><div><svg style="display:block;margin-top:-0.4px" width="24.6" height="24.6" viewBox="0 0 50 50"><circle cx="25" cy="25" r="25" fill="#1a0eb0"/><g><path d="M15 41 Q14 30 25 29 Q36 30 35 41 Q25 44 15 41Z" fill="#3a3a3c"/><path d="M21 26 H29 L27 31 H23Z" fill="#e8e8ee"/><ellipse cx="25" cy="20" rx="4.2" ry="6" fill="#dcaaa6"/><ellipse cx="25" cy="12.5" rx="4.8" ry="3.8" fill="#1a1a22"/></g></svg></div></div>
<div class="c" style="left:152.5px;top:320.2px;width:57.80000000000001px;height:36.30000000000001px;font-size:7.6px;line-height:9.9px;color:#484848;"><div>WWW64661</div></div>
<div class="c" style="left:320.6px;top:320.2px;width:46.89999999999998px;height:36.30000000000001px;font-size:7.6px;line-height:9.9px;color:#484848;"><div>0.00</div></div>
<div class="c" style="left:367.5px;top:320.2px;width:45.19999999999999px;height:36.30000000000001px;font-size:7.6px;line-height:9.9px;color:#484848;"><div>0</div></div>
<div class="c" style="left:412.7px;top:320.2px;width:45.69999999999999px;height:36.30000000000001px;font-size:7.6px;line-height:9.9px;color:#484848;"><div>0</div></div>
<div class="c" style="left:458.4px;top:320.2px;width:56.0px;height:36.30000000000001px;font-size:7.6px;line-height:9.9px;color:#484848;"><div>2025-02-05<br>18:05:48</div></div>
<div class="c" style="left:514.4px;top:320.2px;width:70.0px;height:36.30000000000001px;font-size:7.6px;line-height:9.9px;color:#484848;"><div>103.106.205.154</div></div>
<div class="c" style="left:584.4px;top:320.2px;width:48.10000000000002px;height:36.30000000000001px;font-size:7.6px;line-height:9.9px;color:#484848;font-size:7.5px;line-height:10.2px;color:#333;padding-top:0.5px"><div><span style="font-size:0.93em">未分配或</span><br><span style="font-size:0.93em">者内网</span>IP</div></div>
<div class="a" style="left:639.9px;top:334.45000000000005px;width:27px;height:12px;border-radius:6px;background:#5FB878"></div>
<div class="a" style="left:656.4px;top:336.35px;width:8.2px;height:8.2px;border-radius:50%;background:#fff"></div>
<div class="t" style="left:643.9px;top:335.95000000000005px;font-size:6.5px;line-height:9px;color:#fff">ON</div>
<div class="a" style="left:680.1px;top:334.45000000000005px;width:27.5px;height:12px;border-radius:6px;border:0.8px solid #e6e6e6;background:#fff"></div>
<div class="a" style="left:683.9px;top:336.45000000000005px;width:7.8px;height:7.8px;border-radius:50%;background:#d2d2d2"></div>
<div class="t" style="left:692.5px;top:335.95000000000005px;font-size:6.3px;line-height:9px;color:#a0a0a0;letter-spacing:-0.15px">OFF</div>
<div class="a" style="left:721.3px;top:334.45000000000005px;width:27.5px;height:12px;border-radius:6px;border:0.8px solid #e6e6e6;background:#fff"></div>
<div class="a" style="left:725.0999999999999px;top:336.45000000000005px;width:7.8px;height:7.8px;border-radius:50%;background:#d2d2d2"></div>
<div class="t" style="left:733.6999999999999px;top:335.95000000000005px;font-size:6.3px;line-height:9px;color:#a0a0a0;letter-spacing:-0.15px">OFF</div>
<div class="a" style="left:762.3px;top:334.45000000000005px;width:27.5px;height:12px;border-radius:6px;border:0.8px solid #e6e6e6;background:#fff"></div>
<div class="a" style="left:766.0999999999999px;top:336.45000000000005px;width:7.8px;height:7.8px;border-radius:50%;background:#d2d2d2"></div>
<div class="t" style="left:774.6999999999999px;top:335.95000000000005px;font-size:6.3px;line-height:9px;color:#a0a0a0;letter-spacing:-0.15px">OFF</div>
<div class="btn" style="left:817px;top:323.65000000000003px;width:25.9px;height:14.8px;font-size:7.9px">充值</div>
<div class="btn" style="left:850px;top:323.65000000000003px;width:26px;height:14.8px;font-size:7.9px">提现</div>
<div class="btn" style="left:883.5px;top:323.65000000000003px;width:42px;height:14.8px;font-size:7.9px">修改积分</div>
<div class="btn" style="left:932.7px;top:323.65000000000003px;width:17.9px;height:14.8px"><svg width="6" height="6" viewBox="0 0 12 12"><path d="M2 10 L10 2" stroke="#fff" stroke-width="2.2" stroke-linecap="round"/></svg></div>
<div class="btn" style="left:957.8px;top:323.65000000000003px;width:17.9px;height:14.8px;background:#fb6232"><svg width="7" height="6.2" viewBox="0 0 14 12.4"><rect x="0" y="0" width="14" height="2.4" fill="rgba(255,228,200,.9)"/><path d="M1.4 3H12.6L11.8 12.4H2.2Z" fill="rgba(255,215,215,.8)"/></svg></div>
<div class="btn" style="left:878px;top:338.75000000000006px;width:41.8px;height:14.8px;font-size:7.9px">金额详情</div>
<div class="c" style="left:112px;top:356.5px;width:40.5px;height:36.80000000000001px;font-size:7.6px;line-height:9.9px;color:#484848;"><div><svg style="display:block;margin-top:-0.4px" width="24.6" height="24.6" viewBox="0 0 50 50"><circle cx="25" cy="25" r="25" fill="#1a0eb0"/><g><path d="M15 41 Q14 30 25 29 Q36 30 35 41 Q25 44 15 41Z" fill="#3a3a3c"/><path d="M21 26 H29 L27 31 H23Z" fill="#e8e8ee"/><ellipse cx="25" cy="20" rx="4.2" ry="6" fill="#dcaaa6"/><ellipse cx="25" cy="12.5" rx="4.8" ry="3.8" fill="#1a1a22"/></g></svg></div></div>
<div class="c" style="left:152.5px;top:356.5px;width:57.80000000000001px;height:36.80000000000001px;font-size:7.6px;line-height:9.9px;color:#484848;"><div>WWW64661</div></div>
<div class="c" style="left:320.6px;top:356.5px;width:46.89999999999998px;height:36.80000000000001px;font-size:7.6px;line-height:9.9px;color:#484848;"><div>0.00</div></div>
<div class="c" style="left:367.5px;top:356.5px;width:45.19999999999999px;height:36.80000000000001px;font-size:7.6px;line-height:9.9px;color:#484848;"><div>0</div></div>
<div class="c" style="left:412.7px;top:356.5px;width:45.69999999999999px;height:36.80000000000001px;font-size:7.6px;line-height:9.9px;color:#484848;"><div>0</div></div>
<div class="c" style="left:458.4px;top:356.5px;width:56.0px;height:36.80000000000001px;font-size:7.6px;line-height:9.9px;color:#484848;"><div>2025-02-05<br>17:58:35</div></div>
<div class="c" style="left:514.4px;top:356.5px;width:70.0px;height:36.80000000000001px;font-size:7.6px;line-height:9.9px;color:#484848;"><div>103.106.205.154</div></div>
<div class="c" style="left:584.4px;top:356.5px;width:48.10000000000002px;height:36.80000000000001px;font-size:7.6px;line-height:9.9px;color:#484848;font-size:7.5px;line-height:10.2px;color:#333;padding-top:0.5px"><div><span style="font-size:0.93em">未分配或</span><br><span style="font-size:0.93em">者内网</span>IP</div></div>
<div class="a" style="left:639.9px;top:371.0px;width:27px;height:12px;border-radius:6px;background:#5FB878"></div>
<div class="a" style="left:656.4px;top:372.9px;width:8.2px;height:8.2px;border-radius:50%;background:#fff"></div>
<div class="t" style="left:643.9px;top:372.5px;font-size:6.5px;line-height:9px;color:#fff">ON</div>
<div class="a" style="left:680.1px;top:371.0px;width:27.5px;height:12px;border-radius:6px;border:0.8px solid #e6e6e6;background:#fff"></div>
<div class="a" style="left:683.9px;top:373.0px;width:7.8px;height:7.8px;border-radius:50%;background:#d2d2d2"></div>
<div class="t" style="left:692.5px;top:372.5px;font-size:6.3px;line-height:9px;color:#a0a0a0;letter-spacing:-0.15px">OFF</div>
<div class="a" style="left:721.3px;top:371.0px;width:27.5px;height:12px;border-radius:6px;border:0.8px solid #e6e6e6;background:#fff"></div>
<div class="a" style="left:725.0999999999999px;top:373.0px;width:7.8px;height:7.8px;border-radius:50%;background:#d2d2d2"></div>
<div class="t" style="left:733.6999999999999px;top:372.5px;font-size:6.3px;line-height:9px;color:#a0a0a0;letter-spacing:-0.15px">OFF</div>
<div class="a" style="left:762.3px;top:371.0px;width:27.5px;height:12px;border-radius:6px;border:0.8px solid #e6e6e6;background:#fff"></div>
<div class="a" style="left:766.0999999999999px;top:373.0px;width:7.8px;height:7.8px;border-radius:50%;background:#d2d2d2"></div>
<div class="t" style="left:774.6999999999999px;top:372.5px;font-size:6.3px;line-height:9px;color:#a0a0a0;letter-spacing:-0.15px">OFF</div>
<div class="btn" style="left:817px;top:360.2px;width:25.9px;height:14.8px;font-size:7.9px">充值</div>
<div class="btn" style="left:850px;top:360.2px;width:26px;height:14.8px;font-size:7.9px">提现</div>
<div class="btn" style="left:883.5px;top:360.2px;width:42px;height:14.8px;font-size:7.9px">修改积分</div>
<div class="btn" style="left:932.7px;top:360.2px;width:17.9px;height:14.8px"><svg width="6" height="6" viewBox="0 0 12 12"><path d="M2 10 L10 2" stroke="#fff" stroke-width="2.2" stroke-linecap="round"/></svg></div>
<div class="btn" style="left:957.8px;top:360.2px;width:17.9px;height:14.8px;background:#fb6232"><svg width="7" height="6.2" viewBox="0 0 14 12.4"><rect x="0" y="0" width="14" height="2.4" fill="rgba(255,228,200,.9)"/><path d="M1.4 3H12.6L11.8 12.4H2.2Z" fill="rgba(255,215,215,.8)"/></svg></div>
<div class="btn" style="left:878px;top:375.3px;width:41.8px;height:14.8px;font-size:7.9px">金额详情</div>
<div class="c" style="left:112px;top:393.3px;width:40.5px;height:76.69999999999999px;font-size:7.6px;line-height:9.9px;color:#484848;"><div><svg style="display:block;margin-top:-0.4px" width="24.6" height="24.6" viewBox="0 0 50 50"><circle cx="25" cy="25" r="25" fill="#1a0eb0"/><g><path d="M15 41 Q14 30 25 29 Q36 30 35 41 Q25 44 15 41Z" fill="#3a3a3c"/><path d="M21 26 H29 L27 31 H23Z" fill="#e8e8ee"/><ellipse cx="25" cy="20" rx="4.2" ry="6" fill="#dcaaa6"/><ellipse cx="25" cy="12.5" rx="4.8" ry="3.8" fill="#1a1a22"/></g></svg></div></div>
<div class="c" style="left:152.5px;top:393.3px;width:57.80000000000001px;height:76.69999999999999px;font-size:7.6px;line-height:9.9px;color:#484848;"><div>WWW64661</div></div>
<div class="c" style="left:320.6px;top:393.3px;width:46.89999999999998px;height:76.69999999999999px;font-size:7.6px;line-height:9.9px;color:#484848;"><div>0.00</div></div>
<div class="c" style="left:367.5px;top:393.3px;width:45.19999999999999px;height:76.69999999999999px;font-size:7.6px;line-height:9.9px;color:#484848;"><div>0</div></div>
<div class="c" style="left:412.7px;top:393.3px;width:45.69999999999999px;height:76.69999999999999px;font-size:7.6px;line-height:9.9px;color:#484848;"><div>0</div></div>
<div class="c" style="left:458.4px;top:393.3px;width:56.0px;height:76.69999999999999px;font-size:7.6px;line-height:9.9px;color:#484848;"><div>2025-02-05<br>17:47:08</div></div>
<div class="c" style="left:514.4px;top:393.3px;width:70.0px;height:76.69999999999999px;font-size:7.6px;line-height:9.9px;color:#484848;"><div>43.242.203.206</div></div>
<div class="c" style="left:584.4px;top:393.3px;width:48.10000000000002px;height:76.69999999999999px;font-size:7.6px;line-height:9.9px;color:#484848;font-size:7.5px;line-height:10.2px;color:#333;padding-top:0.5px"><div><span style="font-size:0.93em">香港</span> 0 <span style="font-size:0.93em">香</span><br><span style="font-size:0.93em">港特别行</span><br><span style="font-size:0.93em">政区</span> 0<br>Hong<br>Kong<br>Internet<br>Exchange</div></div>
<div class="a" style="left:639.9px;top:427.75px;width:27px;height:12px;border-radius:6px;background:#5FB878"></div>
<div class="a" style="left:656.4px;top:429.65px;width:8.2px;height:8.2px;border-radius:50%;background:#fff"></div>
<div class="t" style="left:643.9px;top:429.25px;font-size:6.5px;line-height:9px;color:#fff">ON</div>
<div class="a" style="left:680.1px;top:427.75px;width:27.5px;height:12px;border-radius:6px;border:0.8px solid #e6e6e6;background:#fff"></div>
<div class="a" style="left:683.9px;top:429.75px;width:7.8px;height:7.8px;border-radius:50%;background:#d2d2d2"></div>
<div class="t" style="left:692.5px;top:429.25px;font-size:6.3px;line-height:9px;color:#a0a0a0;letter-spacing:-0.15px">OFF</div>
<div class="a" style="left:721.3px;top:427.75px;width:27.5px;height:12px;border-radius:6px;border:0.8px solid #e6e6e6;background:#fff"></div>
<div class="a" style="left:725.0999999999999px;top:429.75px;width:7.8px;height:7.8px;border-radius:50%;background:#d2d2d2"></div>
<div class="t" style="left:733.6999999999999px;top:429.25px;font-size:6.3px;line-height:9px;color:#a0a0a0;letter-spacing:-0.15px">OFF</div>
<div class="a" style="left:762.3px;top:427.75px;width:27.5px;height:12px;border-radius:6px;border:0.8px solid #e6e6e6;background:#fff"></div>
<div class="a" style="left:766.0999999999999px;top:429.75px;width:7.8px;height:7.8px;border-radius:50%;background:#d2d2d2"></div>
<div class="t" style="left:774.6999999999999px;top:429.25px;font-size:6.3px;line-height:9px;color:#a0a0a0;letter-spacing:-0.15px">OFF</div>
<div class="btn" style="left:817px;top:416.95px;width:25.9px;height:14.8px;font-size:7.9px">充值</div>
<div class="btn" style="left:850px;top:416.95px;width:26px;height:14.8px;font-size:7.9px">提现</div>
<div class="btn" style="left:883.5px;top:416.95px;width:42px;height:14.8px;font-size:7.9px">修改积分</div>
<div class="btn" style="left:932.7px;top:416.95px;width:17.9px;height:14.8px"><svg width="6" height="6" viewBox="0 0 12 12"><path d="M2 10 L10 2" stroke="#fff" stroke-width="2.2" stroke-linecap="round"/></svg></div>
<div class="btn" style="left:957.8px;top:416.95px;width:17.9px;height:14.8px;background:#fb6232"><svg width="7" height="6.2" viewBox="0 0 14 12.4"><rect x="0" y="0" width="14" height="2.4" fill="rgba(255,228,200,.9)"/><path d="M1.4 3H12.6L11.8 12.4H2.2Z" fill="rgba(255,215,215,.8)"/></svg></div>
<div class="btn" style="left:878px;top:432.05px;width:41.8px;height:14.8px;font-size:7.9px">金额详情</div>
<div class="c" style="left:112px;top:470px;width:40.5px;height:37px;font-size:7.6px;line-height:9.9px;color:#484848;"><div><svg style="display:block;margin-top:-0.4px" width="24.6" height="24.6" viewBox="0 0 50 50"><circle cx="25" cy="25" r="25" fill="#1a0eb0"/><g><path d="M15 41 Q14 30 25 29 Q36 30 35 41 Q25 44 15 41Z" fill="#3a3a3c"/><path d="M21 26 H29 L27 31 H23Z" fill="#e8e8ee"/><ellipse cx="25" cy="20" rx="4.2" ry="6" fill="#dcaaa6"/><ellipse cx="25" cy="12.5" rx="4.8" ry="3.8" fill="#1a1a22"/></g></svg></div></div>
<div class="c" style="left:152.5px;top:470px;width:57.80000000000001px;height:37px;font-size:7.6px;line-height:9.9px;color:#484848;"><div>WWW64661</div></div>
<div class="c" style="left:320.6px;top:470px;width:46.89999999999998px;height:37px;font-size:7.6px;line-height:9.9px;color:#484848;"><div>0.00</div></div>
<div class="c" style="left:367.5px;top:470px;width:45.19999999999999px;height:37px;font-size:7.6px;line-height:9.9px;color:#484848;"><div>0</div></div>
<div class="c" style="left:412.7px;top:470px;width:45.69999999999999px;height:37px;font-size:7.6px;line-height:9.9px;color:#484848;"><div>0</div></div>
<div class="c" style="left:458.4px;top:470px;width:56.0px;height:37px;font-size:7.6px;line-height:9.9px;color:#484848;"><div>2025-02-05<br>17:42:53</div></div>
<div class="c" style="left:514.4px;top:470px;width:70.0px;height:37px;font-size:7.6px;line-height:9.9px;color:#484848;"><div>122.138.42.28</div></div>
<div class="c" style="left:584.4px;top:470px;width:48.10000000000002px;height:37px;font-size:7.6px;line-height:9.9px;color:#484848;font-size:7.5px;line-height:10.2px;color:#333;padding-top:0.5px"><div><span style="font-size:0.93em">中国</span> <span style="font-size:0.93em">东北</span><br><span style="font-size:0.93em">吉林省</span> <span style="font-size:0.93em">松</span><br><span style="font-size:0.93em">原市</span> <span style="font-size:0.93em">联通</span></div></div>
<div class="a" style="left:639.9px;top:484.6px;width:27px;height:12px;border-radius:6px;background:#5FB878"></div>
<div class="a" style="left:656.4px;top:486.5px;width:8.2px;height:8.2px;border-radius:50%;background:#fff"></div>
<div class="t" style="left:643.9px;top:486.1px;font-size:6.5px;line-height:9px;color:#fff">ON</div>
<div class="a" style="left:680.1px;top:484.6px;width:27.5px;height:12px;border-radius:6px;border:0.8px solid #e6e6e6;background:#fff"></div>
<div class="a" style="left:683.9px;top:486.6px;width:7.8px;height:7.8px;border-radius:50%;background:#d2d2d2"></div>
<div class="t" style="left:692.5px;top:486.1px;font-size:6.3px;line-height:9px;color:#a0a0a0;letter-spacing:-0.15px">OFF</div>
<div class="a" style="left:721.3px;top:484.6px;width:27.5px;height:12px;border-radius:6px;border:0.8px solid #e6e6e6;background:#fff"></div>
<div class="a" style="left:725.0999999999999px;top:486.6px;width:7.8px;height:7.8px;border-radius:50%;background:#d2d2d2"></div>
<div class="t" style="left:733.6999999999999px;top:486.1px;font-size:6.3px;line-height:9px;color:#a0a0a0;letter-spacing:-0.15px">OFF</div>
<div class="a" style="left:762.3px;top:484.6px;width:27.5px;height:12px;border-radius:6px;border:0.8px solid #e6e6e6;background:#fff"></div>
<div class="a" style="left:766.0999999999999px;top:486.6px;width:7.8px;height:7.8px;border-radius:50%;background:#d2d2d2"></div>
<div class="t" style="left:774.6999999999999px;top:486.1px;font-size:6.3px;line-height:9px;color:#a0a0a0;letter-spacing:-0.15px">OFF</div>
<div class="btn" style="left:817px;top:473.8px;width:25.9px;height:14.8px;font-size:7.9px">充值</div>
<div class="btn" style="left:850px;top:473.8px;width:26px;height:14.8px;font-size:7.9px">提现</div>
<div class="btn" style="left:883.5px;top:473.8px;width:42px;height:14.8px;font-size:7.9px">修改积分</div>
<div class="btn" style="left:932.7px;top:473.8px;width:17.9px;height:14.8px"><svg width="6" height="6" viewBox="0 0 12 12"><path d="M2 10 L10 2" stroke="#fff" stroke-width="2.2" stroke-linecap="round"/></svg></div>
<div class="btn" style="left:957.8px;top:473.8px;width:17.9px;height:14.8px;background:#fb6232"><svg width="7" height="6.2" viewBox="0 0 14 12.4"><rect x="0" y="0" width="14" height="2.4" fill="rgba(255,228,200,.9)"/><path d="M1.4 3H12.6L11.8 12.4H2.2Z" fill="rgba(255,215,215,.8)"/></svg></div>
<div class="btn" style="left:878px;top:488.90000000000003px;width:41.8px;height:14.8px;font-size:7.9px">金额详情</div>
<div class="a" style="left:386.1px;top:510.5px;width:91.3px;height:14.8px;background:#fff;border:0.6px solid #e6e6e6"></div>
<div class="btn" style="left:386.1px;top:510.5px;width:19.3px;height:14.8px;font-size:6px;border-radius:0;padding-top:1px">1</div>
<div class="c" style="left:405.4px;top:510.5px;width:19.400000000000034px;height:14.8px;font-size:6px;color:#333;border-left:0.6px solid #e6e6e6;padding-top:1px">2</div>
<div class="c" style="left:424.8px;top:510.5px;width:19.30000000000001px;height:14.8px;font-size:6px;color:#333;border-left:0.6px solid #e6e6e6;padding-top:1px">3</div>
<div class="c" style="left:444.1px;top:510.5px;width:33.299999999999955px;height:14.8px;font-size:6px;color:#333;border-left:0.6px solid #e6e6e6;padding-top:1.6px">下一页</div>
<div class="t" style="left:485px;top:515.3px;font-size:5.9px;line-height:8px;color:#999">到第</div>
<div class="a" style="left:501.5px;top:510.5px;width:24.9px;height:14.8px;background:#fff;border:0.6px solid #e6e6e6;border-radius:1px"></div>
<div class="t" style="left:506.5px;top:514.6px;font-size:6px;line-height:8px;color:#333">1</div>
<div class="t" style="left:531px;top:515.3px;font-size:5.9px;line-height:8px;color:#999">页</div>
<div class="btn" style="left:541.2px;top:510.5px;width:28.2px;height:14.8px;font-size:6.2px;padding-top:1.4px">确定</div>
<div class="a" style="left:1007px;top:34.7px;width:8px;height:500px;background:#f1f1f1"></div>
<div class="a" style="left:1008px;top:38.8px;width:6.4px;height:376px;background:#c1c1c1"></div>
<div class="a" style="left:1015px;top:0;width:9px;height:534px;background:#f1f1f1"></div>
<div class="a" style="left:1016.8px;top:8px;width:6.2px;height:489.5px;background:#c1c1c1"></div>
<svg class="a" style="left:1017px;top:2.5px" width="5" height="3" viewBox="0 0 10 6"><path d="M1 6L5 1.5L9 6Z" fill="#b8b8b8"/></svg>
<svg class="a" style="left:1017px;top:528px" width="5" height="3" viewBox="0 0 10 6"><path d="M0 0L5 6L10 0Z" fill="#505050"/></svg>
</body></html>
